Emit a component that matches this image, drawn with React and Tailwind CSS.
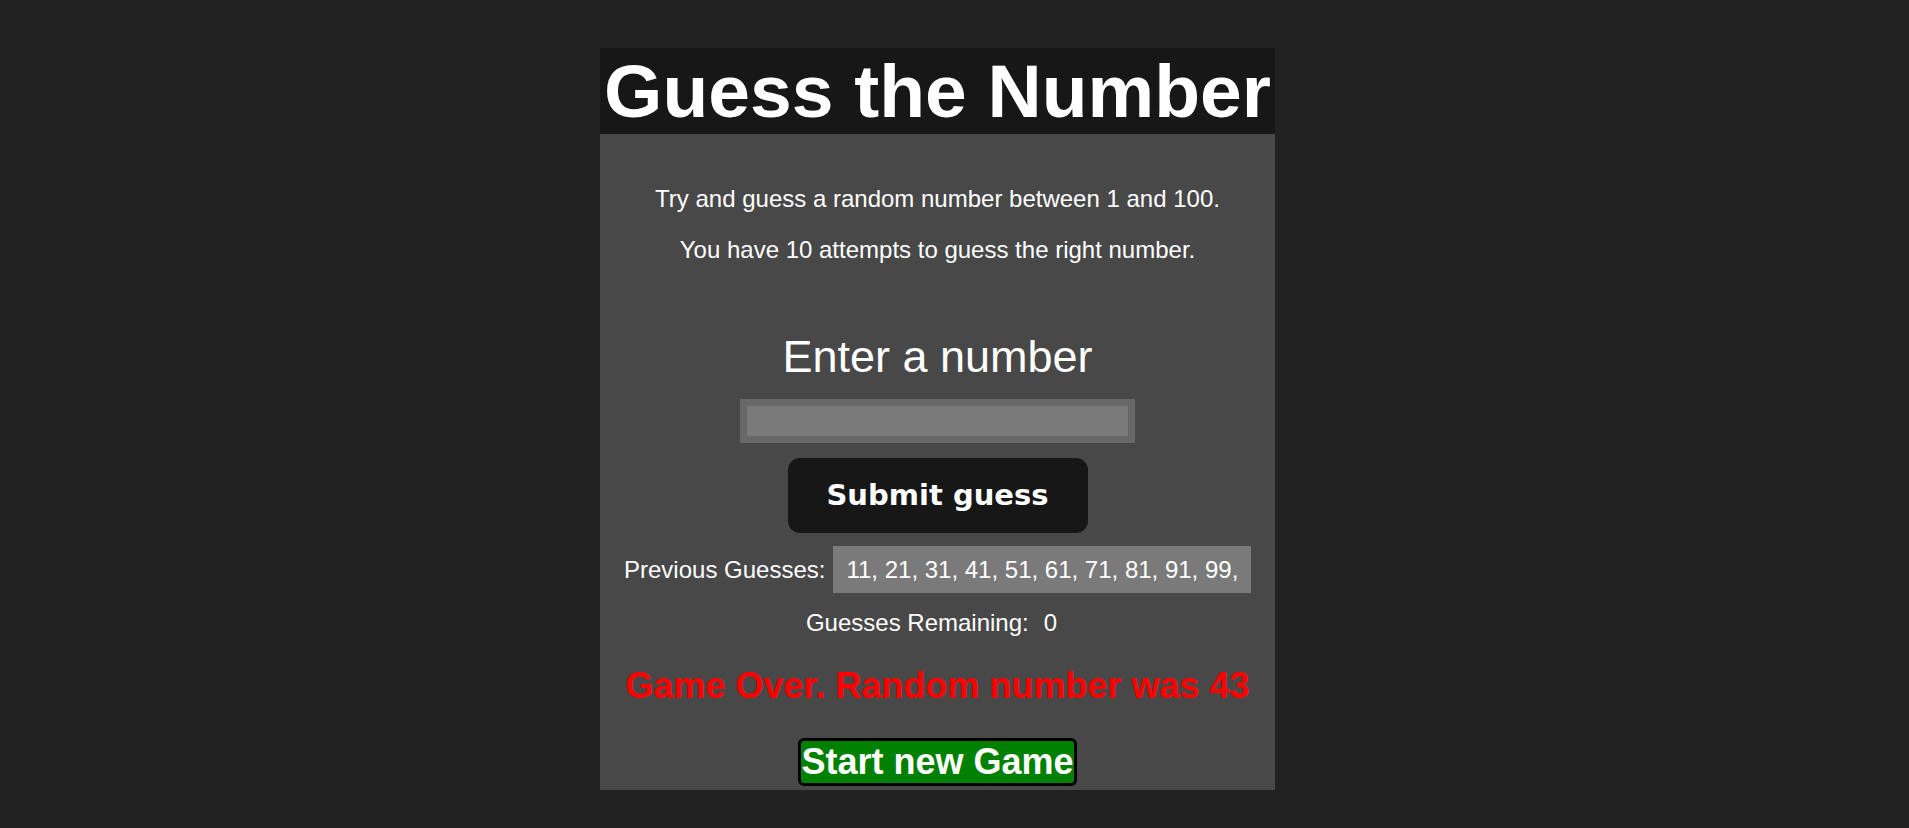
import React, { useState } from "react";

const guesses = [11, 21, 31, 41, 51, 61, 71, 81, 91, 99];

export default function App() {
  const [value, setValue] = useState("");

  return (
    <div className="min-h-screen bg-[#212121] pt-12 pr-[34px] flex justify-center font-['Liberation_Sans',Arial,sans-serif] text-white">
      <div className="w-[675px] h-fit bg-[#484848] flex flex-col items-center pb-1">
        {/* Title */}
        <h1 className="w-full bg-[#171717] text-center font-bold text-[75px] leading-[86px] whitespace-nowrap">
          Guess the Number
        </h1>

        {/* Intro */}
        <p className="mt-[51px] text-[24px] leading-[27px]">
          Try and guess a random number between 1 and 100.
        </p>
        <p className="mt-[24px] text-[24px] leading-[27px]">
          You have 10 attempts to guess the right number.
        </p>

        {/* Guess form */}
        <label htmlFor="guess" className="mt-[69px] text-[45px] leading-[50px]">
          Enter a number
        </label>
        <input
          id="guess"
          type="number"
          value={value}
          onChange={(e) => setValue(e.target.value)}
          disabled
          className="mt-[17px] w-[395px] h-[44px] border-[7px] border-[#686868] bg-[#7a7a7a] px-2 text-[24px] text-white outline-none"
        />
        <button
          type="button"
          className="mt-[15px] w-[300px] h-[75px] rounded-[12px] bg-[#171717] text-white text-[29px] font-bold font-['DejaVu_Sans',sans-serif]"
        >
          Submit guess
        </button>

        {/* Results */}
        <div className="mt-[13px] flex items-center text-[24px] leading-[27px]">
          <span>Previous Guesses:</span>
          <span className="ml-[8px] h-[47px] flex items-center bg-[#7a7a7a] pl-[13px] pr-[6px] whitespace-pre">
            {guesses.join(", ") + ", "}
          </span>
        </div>
        <div className="mt-[16px] flex items-center text-[24px] leading-[27px] pr-[12px]">
          <span>Guesses Remaining:</span>
          <span className="ml-[15px]">0</span>
        </div>

        <p className="mt-[30px] text-[36px] leading-[40px] font-bold text-[#ff0000]">
          Game Over. Random number was 43
        </p>

        <button
          type="button"
          className="mt-[32px] border-[3px] border-black rounded-[6px] bg-[#008000] text-white text-[36px] leading-[42px] font-bold px-0"
        >
          Start new Game
        </button>
      </div>
    </div>
  );
}
